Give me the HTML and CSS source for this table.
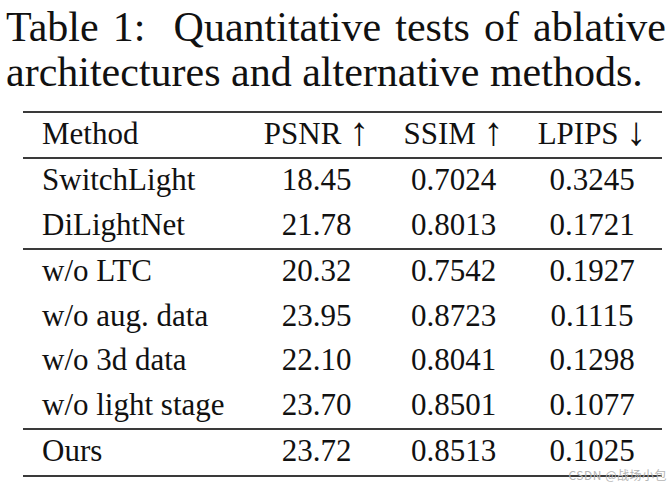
FILE: index.html
```html
<!DOCTYPE html>
<html lang="en">
<head>
<meta charset="utf-8">
<title>Table 1</title>
<link rel="stylesheet" href="styles.css">
</head>
<body>
<div class="page">
  <p class="caption">Table 1:&nbsp; Quantitative tests of ablative architectures and alternative methods.</p>
  <div class="results">
    <div class="row head">
      <span class="name">Method</span>
      <span>PSNR <span class="arrow">&#x2191;</span></span>
      <span>SSIM <span class="arrow">&#x2191;</span></span>
      <span>LPIPS <span class="arrow">&#x2193;</span></span>
    </div>
    <div class="row">
      <span class="name">SwitchLight</span><span>18.45</span><span>0.7024</span><span>0.3245</span>
    </div>
    <div class="row">
      <span class="name">DiLightNet</span><span>21.78</span><span>0.8013</span><span>0.1721</span>
    </div>
    <div class="row group">
      <span class="name">w/o LTC</span><span>20.32</span><span>0.7542</span><span>0.1927</span>
    </div>
    <div class="row">
      <span class="name">w/o aug. data</span><span>23.95</span><span>0.8723</span><span>0.1115</span>
    </div>
    <div class="row">
      <span class="name">w/o 3d data</span><span>22.10</span><span>0.8041</span><span>0.1298</span>
    </div>
    <div class="row">
      <span class="name">w/o light stage</span><span>23.70</span><span>0.8501</span><span>0.1077</span>
    </div>
    <div class="row group last">
      <span class="name">Ours</span><span>23.72</span><span>0.8513</span><span>0.1025</span>
    </div>
  </div>
  <span class="watermark">CSDN @战场小包</span>
</div>
</body>
</html>
```

FILE: styles.css
```css
html, body {
  margin: 0;
  padding: 0;
  background: #ffffff;
}

.page {
  position: relative;
  width: 672px;
  height: 486px;
  padding: 5px 6px 0 6px;
  box-sizing: border-box;
  font-family: "Liberation Serif", "Times New Roman", serif;
  color: #111111;
}

.caption {
  margin: 0;
  width: 660px;
  font-size: 42px;
  line-height: 45px;
  text-align: justify;
}

.results {
  margin: 16px 0 0 17px;
  width: 639px;
  font-size: 31px;
  line-height: 1;
  border-top: 2px solid #3a3a3a;
}

.row {
  display: grid;
  grid-template-columns: 225px 137px 137px 140px;
  align-items: center;
  height: 41.5px;
  padding-bottom: 3px;
}

.row > span {
  text-align: center;
  white-space: nowrap;
}

.row > .name {
  text-align: left;
  padding-left: 19px;
}

.arrow {
  font-size: 40px;
  line-height: 0;
  vertical-align: -1px;
}

.row.head {
  height: 41px;
  border-bottom: 2px solid #3a3a3a;
}

.row.group {
  border-top: 2px solid #3a3a3a;
}

.row.last {
  border-bottom: 2px solid #3a3a3a;
}

.watermark {
  position: absolute;
  right: 5px;
  bottom: 5px;
  font-family: "Noto Sans CJK SC", "Noto Sans", sans-serif;
  font-size: 12px;
  line-height: 1;
  color: #b5b5b5;
  letter-spacing: 0.5px;
}
```
